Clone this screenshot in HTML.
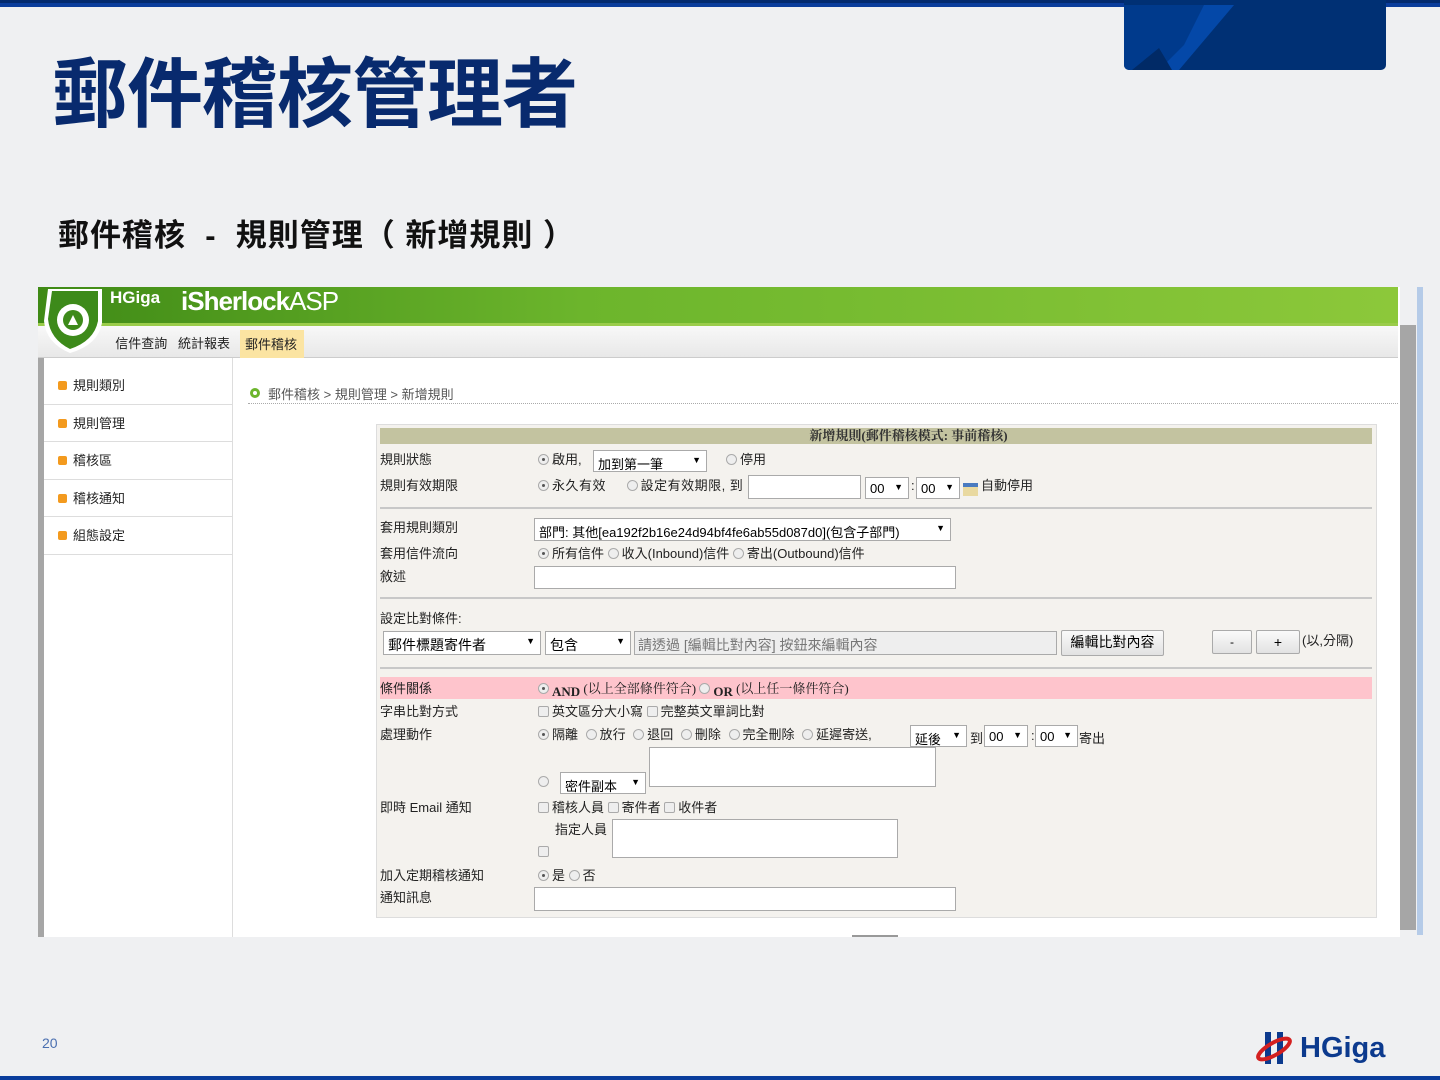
<!DOCTYPE html>
<html><head><meta charset="utf-8"><style>
*{margin:0;padding:0;box-sizing:border-box}
body{width:1440px;height:1080px;background:#eff0f2;position:relative;overflow:hidden;font-family:"Liberation Sans","Noto Sans CJK TC",sans-serif}
.a{position:absolute}
.f{font-size:13px;color:#222;white-space:nowrap}
.rad{display:inline-block;width:11px;height:11px;border:1px solid #aaa;border-radius:50%;background:#eee;vertical-align:-1px;margin-right:3px;position:relative}
.rad.on::after{content:"";position:absolute;left:3px;top:3px;width:3px;height:3px;border-radius:50%;background:#555}
.cb{display:inline-block;width:11px;height:11px;border:1px solid #aaa;border-radius:2px;background:#eee;vertical-align:-1px;margin-right:3px}
.sel{position:absolute;height:22px;background:#fff;border:1px solid #aaa;font-size:13px;padding:3px 4px;white-space:nowrap}
.sel::after{content:"▼";position:absolute;right:5px;top:4px;font-size:9px}
.inp{position:absolute;background:#fff;border:1px solid #aaa}
.btn{position:absolute;background:linear-gradient(#fafafa,#e2e2e2);border:1px solid #aaa;border-radius:2px;font-size:14px;text-align:center;line-height:22px}
.hr{position:absolute;left:380px;width:992px;height:2px;background:#c8c8c8}
.side div{height:37.5px;border-bottom:1px solid #ddd;font-size:13px;padding-left:14px;line-height:37px;color:#222}
.side i{display:inline-block;width:9px;height:9px;background:#f39a1e;border-radius:2px;margin-right:6px;vertical-align:0}
</style></head><body>
<div class="a" style="left:0;top:0;width:1440px;height:7px;background:#0a3d9c"></div>
<div class="a" style="left:0;top:0;width:1440px;height:3px;background:#032a6e"></div>
<div class="a" style="left:1124px;top:0;width:262px;height:70px;background:#003074;border-radius:0 0 5px 5px;overflow:hidden">
<svg width="262" height="70"><polygon points="0,5 110,5 52,70 0,70" fill="#003a8c"/><polygon points="80,5 110,5 55,70 35,70 60,45" fill="#0448a8"/><polygon points="8,70 35,48 48,70" fill="#012a66"/></svg></div>
<div class="a" style="left:52px;top:56px;font-size:76px;font-weight:bold;color:#082a6e;letter-spacing:-1px;line-height:80px">郵件稽核管理者</div>
<div class="a" style="left:58px;top:216px;font-size:31px;font-weight:bold;color:#111;line-height:40px;letter-spacing:1px;white-space:pre">郵件稽核  -  規則管理（ 新增規則 ）</div>

<div class="a" style="left:38px;top:287px;width:1362px;height:650px;background:#fff"></div>
<div class="a" style="left:38px;top:287px;width:1360px;height:38px;background:linear-gradient(90deg,#3f8a16,#6cb52c 40%,#8cc83a)"></div>
<div class="a" style="left:38px;top:323px;width:1360px;height:3px;background:#9acc4a"></div>
<div class="a" style="left:38px;top:326px;width:1360px;height:32px;background:linear-gradient(#f8f8f8,#e8e8e8);border-bottom:1px solid #ccc"></div>
<div class="a" style="left:110px;top:288px;font-size:17px;font-weight:bold;color:#fff">HGiga</div>
<div class="a" style="left:181px;top:286px;font-size:26px;color:#fff;letter-spacing:-1px"><b>iSherlock</b>ASP</div>
<svg class="a" style="left:40px;top:287px" width="70" height="70"><path d="M8 2 L62 2 L62 36 Q58 58 30 66 Q6 56 4 34 Z" fill="#fff"/><path d="M12 4 L58 4 L58 34 Q54 54 30 62 Q10 52 8 32 Z" fill="#3d8a1a"/><circle cx="33" cy="33" r="16" fill="#fff"/><circle cx="33" cy="33" r="10" fill="#3d8a1a"/><path d="M28 38 L33 28 L38 38 Z" fill="#fff"/></svg>
<div class="a f" style="left:108px;top:327px;height:31px;line-height:34px;font-size:13px">&nbsp;&nbsp;信件查詢&nbsp;&nbsp;&nbsp;統計報表</div>
<div class="a f" style="left:240px;top:330px;height:28px;width:64px;background:#fbe4a2;line-height:30px;padding-left:5px">郵件稽核</div>
<div class="a" style="left:38px;top:358px;width:6px;height:579px;background:#a6a6a6"></div>
<div class="a side" style="left:44px;top:367px;width:188px">
<div><i></i>規則類別</div><div><i></i>規則管理</div><div><i></i>稽核區</div><div><i></i>稽核通知</div><div><i></i>組態設定</div></div>
<div class="a" style="left:232px;top:358px;width:1px;height:579px;background:#ddd"></div>
<div class="a" style="left:250px;top:388px;width:10px;height:10px;border-radius:50%;border:3px solid #6cb52c"></div>
<div class="a f" style="left:268px;top:384px;color:#555">郵件稽核 &gt; 規則管理 &gt; 新增規則</div>
<div class="a" style="left:248px;top:403px;width:1150px;border-top:1px dotted #aaa"></div>
<div class="a" style="left:1400px;top:325px;width:16px;height:605px;background:#a6a6a6"></div>
<div class="a" style="left:1417px;top:287px;width:6px;height:648px;background:#b5cbe8"></div>

<div class="a" style="left:376px;top:424px;width:1001px;height:494px;background:#f4f2ee;border:1px solid #ddd"></div>
<div class="a" style="left:380px;top:428px;width:992px;height:16px;background:#c3c3a0;font-size:13px;font-weight:bold;text-align:center;line-height:16px;color:#333;font-family:'Liberation Serif','Noto Serif CJK SC',serif">&nbsp;&nbsp;&nbsp;&nbsp;&nbsp;&nbsp;&nbsp;&nbsp;&nbsp;&nbsp;&nbsp;&nbsp;&nbsp;&nbsp;&nbsp;&nbsp;&nbsp;&nbsp;&nbsp;&nbsp;新增規則(郵件稽核模式: 事前稽核)</div>
<div class="a f" style="left:380px;top:449px">規則狀態</div>
<div class="a f" style="left:538px;top:449px"><span class="rad on"></span>啟用,</div>
<div class="sel" style="left:593px;top:450px;width:114px">加到第一筆</div>
<div class="a f" style="left:726px;top:449px"><span class="rad"></span>停用</div>
<div class="a f" style="left:380px;top:475px">規則有效期限</div>
<div class="a f" style="left:538px;top:475px;letter-spacing:0.5px"><span class="rad on"></span>永久有效&nbsp;&nbsp;&nbsp;&nbsp;&nbsp;<span class="rad"></span>設定有效期限, 到</div>
<div class="inp" style="left:748px;top:475px;width:113px;height:24px"></div>
<div class="sel" style="left:865px;top:477px;width:44px">00</div>
<div class="a f" style="left:911px;top:478px">:</div>
<div class="sel" style="left:916px;top:477px;width:44px">00</div>
<div class="a" style="left:963px;top:483px;width:15px;height:13px;background:#e9d9a0;border-top:4px solid #4a7bc0"></div>
<div class="a f" style="left:981px;top:475px">自動停用</div>
<div class="hr" style="top:507px"></div>
<div class="a f" style="left:380px;top:517px">套用規則類別</div>
<div class="sel" style="left:534px;top:518px;width:417px;height:23px">部門: 其他[ea192f2b16e24d94bf4fe6ab55d087d0](包含子部門)</div>
<div class="a f" style="left:380px;top:543px">套用信件流向</div>
<div class="a f" style="left:538px;top:543px"><span class="rad on"></span>所有信件 <span class="rad"></span>收入(Inbound)信件 <span class="rad"></span>寄出(Outbound)信件</div>
<div class="a f" style="left:380px;top:566px">敘述</div>
<div class="inp" style="left:534px;top:566px;width:422px;height:23px"></div>
<div class="hr" style="top:597px"></div>
<div class="a f" style="left:380px;top:608px">設定比對條件:</div>
<div class="sel" style="left:383px;top:631px;width:158px;height:24px;font-size:14px">郵件標題寄件者</div>
<div class="sel" style="left:545px;top:631px;width:86px;height:24px;font-size:14px">包含</div>
<div class="inp" style="left:634px;top:631px;width:423px;height:24px;background:#eee;font-size:14px;color:#777;padding:3px 3px">請透過 [編輯比對內容] 按鈕來編輯內容</div>
<div class="btn" style="left:1061px;top:630px;width:103px;height:26px">編輯比對內容</div>
<div class="btn" style="left:1212px;top:630px;width:40px;height:24px;font-size:12px">-</div>
<div class="btn" style="left:1256px;top:630px;width:44px;height:24px">+</div>
<div class="a f" style="left:1302px;top:630px">(以,分隔)</div>
<div class="hr" style="top:667px"></div>
<div class="a" style="left:380px;top:677px;width:992px;height:22px;background:#fec4cc"></div>
<div class="a f" style="left:380px;top:678px">條件關係</div>
<div class="a f" style="left:538px;top:678px;font-family:'Liberation Serif','Noto Serif CJK SC',serif"><span class="rad on"></span><b style="font-size:13px;vertical-align:-3px">AND</b> (以上全部條件符合) <span class="rad"></span><b style="vertical-align:-3px">OR</b> (以上任一條件符合)</div>
<div class="a f" style="left:380px;top:701px">字串比對方式</div>
<div class="a f" style="left:538px;top:701px"><span class="cb"></span>英文區分大小寫 <span class="cb"></span>完整英文單詞比對</div>
<div class="a f" style="left:380px;top:724px">處理動作</div>
<div class="a f" style="left:538px;top:724px;word-spacing:4px"><span class="rad on"></span>隔離 <span class="rad"></span>放行 <span class="rad"></span>退回 <span class="rad"></span>刪除 <span class="rad"></span>完全刪除 <span class="rad"></span>延遲寄送,</div>
<div class="sel" style="left:910px;top:725px;width:57px">延後</div>
<div class="a f" style="left:970px;top:728px">到</div>
<div class="sel" style="left:984px;top:725px;width:44px">00</div>
<div class="a f" style="left:1031px;top:728px">:</div>
<div class="sel" style="left:1035px;top:725px;width:43px">00</div>
<div class="a f" style="left:1079px;top:728px">寄出</div>
<div class="inp" style="left:649px;top:747px;width:287px;height:40px"></div>
<div class="a f" style="left:538px;top:774px"><span class="rad"></span></div>
<div class="sel" style="left:560px;top:772px;width:86px">密件副本</div>
<div class="a f" style="left:380px;top:797px">即時 Email 通知</div>
<div class="a f" style="left:538px;top:797px"><span class="cb"></span>稽核人員 <span class="cb"></span>寄件者 <span class="cb"></span>收件者</div>
<div class="a f" style="left:555px;top:819px">指定人員</div>
<div class="inp" style="left:612px;top:819px;width:286px;height:39px"></div>
<div class="a f" style="left:538px;top:844px"><span class="cb"></span></div>
<div class="a f" style="left:380px;top:865px">加入定期稽核通知</div>
<div class="a f" style="left:538px;top:865px"><span class="rad on"></span>是 <span class="rad"></span>否</div>
<div class="a f" style="left:380px;top:887px">通知訊息</div>
<div class="inp" style="left:534px;top:887px;width:422px;height:24px"></div>
<div class="a" style="left:852px;top:935px;width:46px;height:2px;background:#999"></div>

<div class="a" style="left:42px;top:1035px;font-size:14px;color:#4a6fb0">20</div>
<svg class="a" style="left:1255px;top:1029px" width="40" height="38"><rect x="10" y="3" width="6" height="32" fill="#0c3a8e"/><rect x="22" y="3" width="6" height="32" fill="#0c3a8e"/><ellipse cx="19" cy="20" rx="18" ry="6" fill="none" stroke="#d42020" stroke-width="4" transform="rotate(-30 19 20)"/></svg>
<div class="a" style="left:1300px;top:1032px;font-size:29px;font-weight:bold;color:#0c3a8e">HGiga</div>
<div class="a" style="left:0;top:1076px;width:1440px;height:4px;background:#0a3d9c"></div>
</body></html>
